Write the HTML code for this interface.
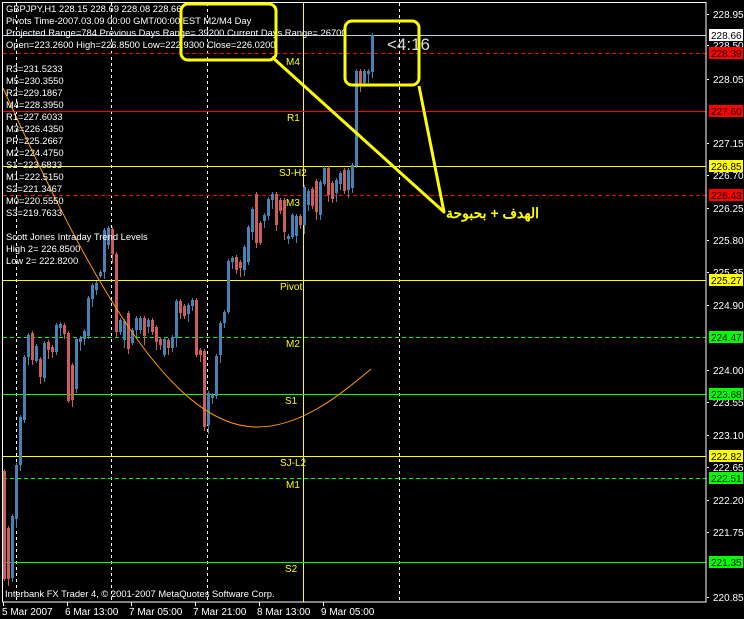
<!DOCTYPE html>
<html><head><meta charset="utf-8"><style>
html,body{margin:0;padding:0;background:#000;width:744px;height:619px;overflow:hidden}
svg text{font-family:"Liberation Sans",sans-serif}
</style></head><body>
<svg id="s" width="744" height="619" xmlns="http://www.w3.org/2000/svg" style="display:block">
<rect width="744" height="619" fill="#000"/>
<g stroke="#fff" stroke-dasharray="3,3" stroke-width="1">
<line x1="16.5" y1="3" x2="16.5" y2="602"/>
<line x1="111.5" y1="3" x2="111.5" y2="602"/>
<line x1="207.5" y1="3" x2="207.5" y2="602"/>
<line x1="399.5" y1="3" x2="399.5" y2="602"/>
</g>
<line x1="303.5" y1="3" x2="303.5" y2="602" stroke="#ffff00"/>
<line x1="3" y1="35.5" x2="706" y2="35.5" stroke="#b0d8e8"/>
<line x1="3" y1="53.5" x2="706" y2="53.5" stroke="#ff0000" stroke-dasharray="4,3"/>
<line x1="3" y1="111.5" x2="706" y2="111.5" stroke="#ff0000"/>
<line x1="3" y1="166.5" x2="706" y2="166.5" stroke="#ffff00"/>
<line x1="3" y1="195.5" x2="706" y2="195.5" stroke="#ff0000" stroke-dasharray="4,3"/>
<line x1="3" y1="280.5" x2="706" y2="280.5" stroke="#ffff00"/>
<line x1="3" y1="337.5" x2="706" y2="337.5" stroke="#00ff00" stroke-dasharray="4,3"/>
<line x1="3" y1="394.5" x2="706" y2="394.5" stroke="#00ff00"/>
<line x1="3" y1="456.5" x2="706" y2="456.5" stroke="#ffff00"/>
<line x1="3" y1="478.5" x2="706" y2="478.5" stroke="#00ff00" stroke-dasharray="4,3"/>
<line x1="3" y1="562.5" x2="706" y2="562.5" stroke="#00ff00"/>
<g id="candles"></g>
<path d="M3,88 C 90,280 170,425 255,427 C 300,428 340,395 371,369" fill="none" stroke="#ff9900" stroke-width="1"/>
<rect x="2.5" y="2.5" width="703.5" height="599.5" fill="none" stroke="#fff"/>
<g fill="#fff" font-size="9.4">
<text x="6" y="12">GBPJPY,H1  228.15 228.69 228.08 228.66</text>
<text x="6" y="24">Pivots Time-2007.03.09 00:00 GMT/00:00 EST M2/M4 Day</text>
<text x="6" y="36">Projected Range=784 Previous Days Range= 39200 Current Days Range= 26700</text>
<text x="6" y="48">Open=223.2600 High=226.8500 Low=222.9300 Close=226.0200</text>
<text x="6" y="72">R3=231.5233</text><text x="6" y="84">M5=230.3550</text>
<text x="6" y="96">R2=229.1867</text><text x="6" y="108">M4=228.3950</text>
<text x="6" y="120">R1=227.6033</text><text x="6" y="132">M3=226.4350</text>
<text x="6" y="144">PP=225.2667</text><text x="6" y="156">M2=224.4750</text>
<text x="6" y="168">S1=223.6833</text><text x="6" y="180">M1=222.5150</text>
<text x="6" y="192">S2=221.3467</text><text x="6" y="204">M0=220.5550</text>
<text x="6" y="216">S3=219.7633</text>
<text x="6" y="240">Scott Jones Intraday Trend Levels</text>
<text x="6" y="252">High 2= 226.8500</text>
<text x="6" y="264">Low 2= 222.8200</text>
<text x="5" y="597">Interbank FX Trader 4, © 2001-2007 MetaQuotes Software Corp.</text>
</g>
<g fill="#ffff00" font-size="10">
<text x="286" y="65">M4</text><text x="287" y="121">R1</text>
<text x="279" y="176">SJ-H2</text><text x="286" y="206">M3</text>
<text x="280" y="290">Pivot</text><text x="286" y="347">M2</text>
<text x="285" y="404">S1</text><text x="280" y="466">SJ-L2</text>
<text x="286" y="488">M1</text><text x="285" y="572">S2</text>
</g>
<text x="387" y="50" fill="#ddd" font-size="17">&lt;4:16</text>
<g fill="none" stroke="#ffff00" stroke-width="3" stroke-linejoin="round">
<rect x="181" y="4" width="95" height="56" rx="7"/>
<rect x="345" y="21" width="74" height="64" rx="7"/>
<polyline points="272,57 444,212 419,86"/>
</g>
<text x="446" y="218" fill="#ffff00" font-size="14" font-weight="bold" font-family="'Liberation Sans','DejaVu Sans',sans-serif">الهدف + بحبوحة</text>
<g fill="#fff" font-size="10" id="axis"></g>
<g font-size="10">
<rect x="709" y="29" width="34" height="12" fill="#fff"/><text x="711" y="39" fill="#000">228.66</text>
<rect x="709" y="47" width="34" height="12" fill="#f00"/><text x="711" y="57" fill="#000">228.39</text>
<rect x="709" y="105" width="34" height="12" fill="#f00"/><text x="711" y="115" fill="#000">227.60</text>
<rect x="709" y="160" width="34" height="12" fill="#ff0"/><text x="711" y="170" fill="#000">226.85</text>
<rect x="709" y="189" width="34" height="12" fill="#f00"/><text x="711" y="199" fill="#000">226.43</text>
<rect x="709" y="274" width="34" height="12" fill="#ff0"/><text x="711" y="284" fill="#000">225.27</text>
<rect x="709" y="331" width="34" height="12" fill="#0f0"/><text x="711" y="341" fill="#000">224.47</text>
<rect x="709" y="388" width="34" height="12" fill="#0f0"/><text x="711" y="398" fill="#000">223.68</text>
<rect x="709" y="450" width="34" height="12" fill="#ff0"/><text x="711" y="460" fill="#000">222.82</text>
<rect x="709" y="472" width="34" height="12" fill="#0f0"/><text x="711" y="482" fill="#000">222.51</text>
<rect x="709" y="556" width="34" height="12" fill="#0f0"/><text x="711" y="566" fill="#000">221.35</text>
</g>
<g fill="#fff" font-size="10">
<text x="2" y="615">5 Mar 2007</text><text x="65" y="615">6 Mar 13:00</text>
<text x="129" y="615">7 Mar 05:00</text><text x="193" y="615">7 Mar 21:00</text>
<text x="257" y="615">8 Mar 13:00</text><text x="321" y="615">9 Mar 05:00</text>
</g>
<g stroke="#fff"><line x1="3.5" y1="602" x2="3.5" y2="606"/><line x1="67.5" y1="602" x2="67.5" y2="606"/><line x1="131.5" y1="602" x2="131.5" y2="606"/><line x1="195.5" y1="602" x2="195.5" y2="606"/><line x1="259.5" y1="602" x2="259.5" y2="606"/><line x1="323.5" y1="602" x2="323.5" y2="606"/></g>
</svg>
<script>
var NS="http://www.w3.org/2000/svg";
function el(p,t,a){var e=document.createElementNS(NS,t);for(var k in a)e.setAttribute(k,a[k]);p.appendChild(e);return e;}
var ax=document.getElementById("axis");
var labs=[["228.95",14],["228.50",45],["228.05",79],["227.15",143],["226.70",175],["226.25",208],["225.80",240],["225.35",272],["224.90",305],["224.00",370],["223.55",402],["223.10",435],["222.65",467],["222.20",500],["221.75",532],["220.85",597]];
labs.forEach(function(l){el(ax,"text",{x:713,y:l[1]+4}).textContent=l[0];el(ax,"rect",{x:707,y:l[1],width:2,height:1});});
var c=[[3,'r',471,579],[7,'r',528,579],[11,'b',516,578],[15,'b',465,519],[19,'b',417,465],[23,'b',357,420],[27,'b',335,357],[31,'r',333,360],[35,'b',346,361],[39,'r',359,377],[43,'b',343,378],[47,'r',342,350],[51,'r',347,352],[55,'b',325,352],[59,'b',324,328],[63,'r',325,334],[67,'r',333,401],[71,'r',365,400],[75,'b',339,389],[79,'b',338,342],[83,'b',331,339],[87,'b',298,336],[91,'b',285,299],[95,'b',283,290],[99,'b',272,276],[103,'b',230,272],[107,'b',228,245],[111,'r',229,254],[115,'r',254,332],[119,'b',320,332],[123,'b',321,340],[127,'r',313,349],[131,'b',330,343],[135,'b',318,330],[139,'b',318,330],[143,'r',318,336],[147,'b',320,327],[151,'r',320,332],[155,'r',327,342],[159,'r',339,345],[163,'b',339,355],[167,'r',340,348],[171,'b',337,348],[175,'b',301,338],[179,'r',301,313],[183,'r',306,316],[187,'b',305,314],[191,'b',300,306],[195,'r',300,355],[199,'r',350,355],[203,'r',351,427],[207,'b',393,425],[211,'b',395,398],[215,'b',356,396],[219,'b',323,355],[223,'b',312,323],[227,'b',261,312],[231,'b',258,262],[235,'r',257,270],[239,'r',262,268],[243,'b',247,270],[247,'b',227,262],[251,'b',209,232],[255,'r',194,243],[259,'r',223,243],[263,'b',215,221],[267,'b',199,216],[271,'b',194,200],[275,'r',194,225],[279,'r',200,211],[283,'r',200,232],[287,'b',236,239],[291,'b',215,237],[295,'b',216,236],[299,'r',216,225],[303,'b',187,225],[307,'b',191,205],[311,'r',189,206],[315,'r',181,212],[319,'b',182,215],[323,'b',168,184],[327,'r',168,195],[331,'r',183,199],[335,'b',180,193],[339,'b',173,184],[343,'r',170,191],[347,'b',170,190],[351,'b',165,188],[355,'b',71,166],[359,'r',71,85],[363,'b',71,83],[367,'b',71,74],[371,'b',35,72]];
var g=document.getElementById("candles");
c.forEach(function(d,i){var col=d[1]=='b'?'#4682b4':'#cd5c5c';var w1=2+((i*7)%7),w2=2+((i*5)%8);
el(g,"rect",{x:d[0]+1,y:d[2]-w1,width:1,height:d[3]-d[2]+w1+w2,fill:col});
el(g,"rect",{x:d[0],y:d[2],width:3,height:Math.max(1,d[3]-d[2]),fill:col});});
</script>
</body></html>
